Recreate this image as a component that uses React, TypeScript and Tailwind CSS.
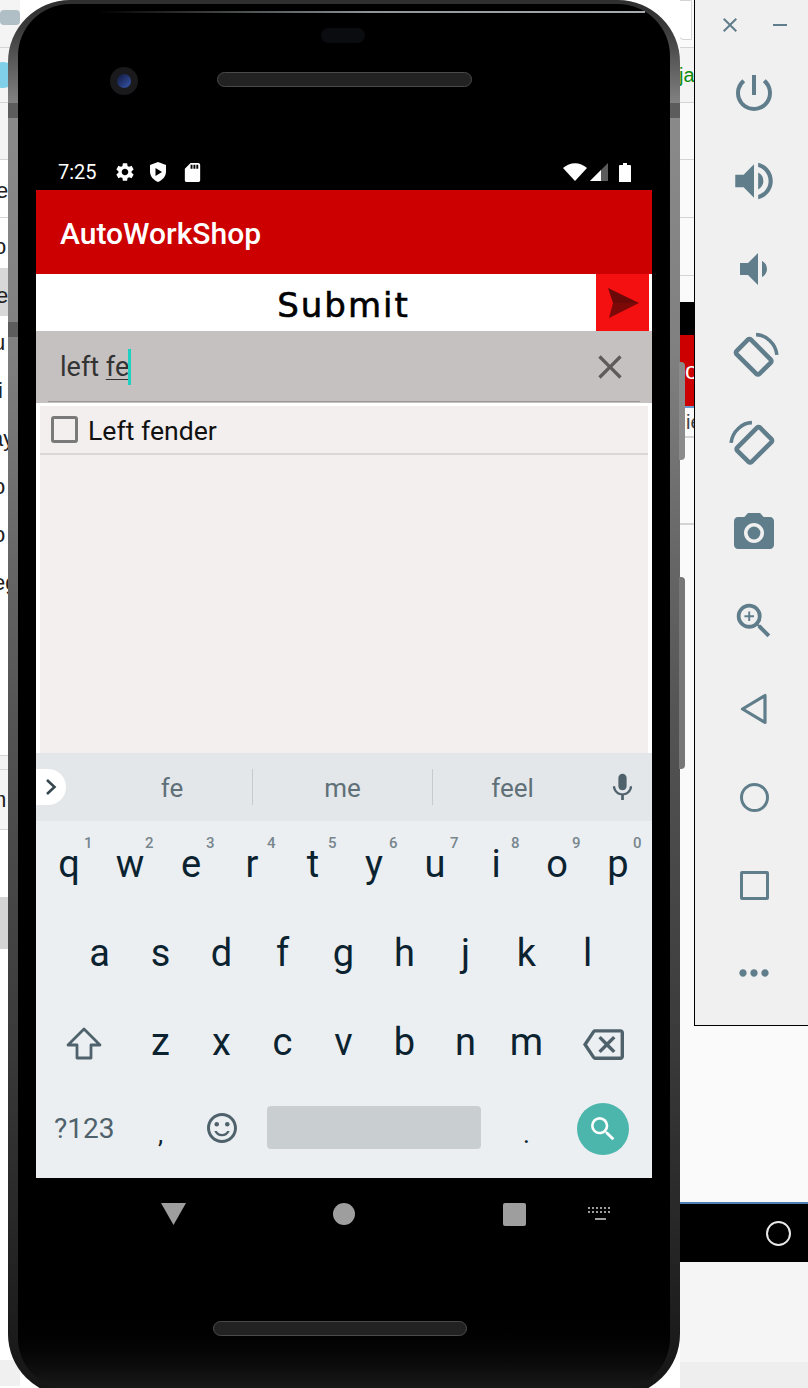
import React from "react";
import {
  MdSettings, MdSdCard, MdSearch, MdMic, MdOutlineBackspace, MdOutlineSentimentSatisfied,
  MdPowerSettingsNew, MdVolumeUp, MdVolumeDown, MdPhotoCamera, MdZoomIn, MdMoreHoriz, MdClose,
} from "react-icons/md";

const roboto = "font-['Roboto',sans-serif]";
const SIDE = "#607d8b";

function Key({ c, n }: { c: string; n?: string }) {
  return (
    <div className="relative flex h-full items-center justify-center text-[38px] leading-none text-[#0b2330]">
      <span className="relative -top-[2px]">{c}</span>
      {n && <span className="absolute right-[7px] top-[13px] text-[15px] font-medium leading-[18px] text-[#78868d]">{n}</span>}
    </div>
  );
}

function RotateIcon({ flip }: { flip?: boolean }) {
  return (
    <svg width="50" height="50" viewBox="0 0 48 48" fill="none" stroke={SIDE} className={flip ? "-scale-x-100" : ""}>
      <rect x="14" y="8.5" width="19.5" height="31" rx="2" strokeWidth="4.4" transform="rotate(-45 23.5 24)" />
      <path d="M26 2.5 C35 2.5 45 11 46 22" strokeWidth="3.4" />
    </svg>
  );
}

const sideIcons: React.ReactNode[] = [
  <MdPowerSettingsNew key="p" size={48} color={SIDE} />,
  <MdVolumeUp key="v" size={50} color={SIDE} />,
  <MdVolumeDown key="d" size={48} color={SIDE} />,
  <RotateIcon key="r" />,
  <RotateIcon key="l" flip />,
  <MdPhotoCamera key="c" size={48} color={SIDE} />,
  <MdZoomIn key="z" size={46} color={SIDE} />,
  <svg key="b" width="28" height="32" viewBox="0 0 28 32" fill="none" stroke={SIDE} strokeWidth="3.2" strokeLinejoin="round"><path d="M25 2.5 V29.5 L2.5 16 Z" /></svg>,
  <div key="o" className="h-[29px] w-[29px] rounded-full border-[3px] border-[#607d8b]" />,
  <div key="s" className="h-[29px] w-[29px] rounded-[2px] border-[3px] border-[#607d8b]" />,
  <MdMoreHoriz key="m" size={44} color={SIDE} />,
];

function Desktop() {
  return (
    <div className="flex h-[1388px] w-[8px] shrink-0 flex-col overflow-visible font-['Liberation_Sans',sans-serif]">
      <div className="w-[20px] bg-[#f4f4f4]">
        <div className="h-[48px] overflow-hidden border-b border-[#d4d4d4] pt-[10px]"><div className="h-[15px] w-[20px] rounded-sm bg-[#b0bec5]" /></div>
        <div className="flex h-[55px] items-center border-b border-[#d4d4d4]"><div className="-ml-[10px] h-[26px] w-[26px] rounded-full bg-[#7fd0e8]" /></div>
        <div className="h-[57px] border-b border-[#d4d4d4]" />
        <div className="flex h-[58px] items-center justify-start border-b border-[#d4d4d4] bg-white pt-[4px] text-[22px] text-[#222]"><span className="-ml-[4px]">e</span></div>
        <div className="flex h-[50px] items-center bg-white pt-[6px] text-[22px] text-[#222]"><span className="-ml-[6px]">o</span></div>
        <div className="flex h-[48px] items-center bg-[#d8d8d8] pt-[6px] text-[22px] text-[#222]"><span className="-ml-[4px]">e</span></div>
        <div className="flex h-[439px] flex-col bg-white pt-[3px] text-[22px] leading-[48px] text-[#222]">
          {["u", "i", "ay", "o", "o", "eg"].map((t, i) => (
            <div key={i} className={`flex h-[48px] items-center ${t === "ay" ? "-ml-[9px]" : t === "eg" ? "-ml-[7px]" : t === "i" ? "-ml-[2px]" : "-ml-[7px]"}`}>{t}</div>
          ))}
        </div>
        <div className="h-[15px] border-y border-[#d4d4d4] bg-[#f2f2f2]" />
        <div className="flex h-[60px] items-center overflow-hidden border-b border-[#d4d4d4] bg-[#f4f4f4] text-[22px] text-[#222]"><span className="-ml-[12px]">m</span></div>
        <div className="h-[67px] bg-white" />
        <div className="h-[52px] bg-[#d4d4d4]" />
        <div className="h-[411px] bg-white" />
        <div className="h-[26px] bg-[#f0f0f0]" />
      </div>
    </div>
  );
}

function StatusBar() {
  return (
    <div className={`flex h-[30px] w-[616px] items-center pb-[6px] pl-[22px] pr-[21px] text-white ${roboto}`}>
      <span className="w-[41px] text-[20px] leading-none">7:25</span>
      <MdSettings size={22} className="ml-[15px]" />
      <svg width="18" height="20" viewBox="0 0 18 20" className="ml-[13px]">
        <path d="M9 0 L17 3 V9.5 C17 14.5 13.5 18 9 20 C4.5 18 1 14.5 1 9.5 V3 Z" fill="#fff" />
        <path d="M6.5 6 L13 10 L6.5 14 Z" fill="#000" />
      </svg>
      <MdSdCard size={23} className="ml-[14px]" />
      <div className="flex-1" />
      <svg width="24" height="18" viewBox="0 0 24 18"><path d="M0 5 C7 -1.5 17 -1.5 24 5 L12 18 Z" fill="#fff" /></svg>
      <svg width="18" height="18" viewBox="0 0 18 18" className="ml-[3px]"><path d="M18 0 V18 H0 Z" fill="#5c5c5c" /><path d="M11 7 V18 H0 Z" fill="#fff" /></svg>
      <svg width="12" height="19" viewBox="0 0 12 19" className="ml-[11px]"><path d="M4 0 H8 V2 H11 A1 1 0 0 1 12 3 V19 H0 V3 A1 1 0 0 1 1 2 H4 Z" fill="#fff" /></svg>
    </div>
  );
}

function Suggestions() {
  return (
    <div className="flex h-[68px] items-center bg-[#e4e7ea] text-[26px] text-[#5f7078]">
      <div className="flex h-[36px] w-[30px] items-center justify-center rounded-r-[18px] bg-white">
        <svg width="12" height="18" viewBox="0 0 12 18" fill="none" stroke="#37474f" strokeWidth="2.6"><path d="M2 2 L9.5 9 L2 16" /></svg>
      </div>
      <div className="w-[26px]" />
      <div className="flex h-[36px] w-[161px] items-center justify-center border-r border-[#c6cbce] pt-[2px]">fe</div>
      <div className="flex h-[36px] w-[180px] items-center justify-center border-r border-[#c6cbce] pt-[2px]">me</div>
      <div className="flex h-[36px] w-[159px] items-center justify-center pt-[2px]">feel</div>
      <div className="flex flex-1 items-center justify-center"><MdMic size={33} color="#4f626c" /></div>
    </div>
  );
}

function Keyboard() {
  const row = "h-[89.25px]";
  const wide = "grid grid-cols-[91.5px_repeat(7,61px)_92px]";
  return (
    <div className={`h-[357px] bg-[#ebeff2] pl-[2.5px] ${roboto}`}>
      <div className={`grid grid-cols-[repeat(10,61px)] ${row}`}>
        {"qwertyuiop".split("").map((c, i) => <Key key={c} c={c} n={String((i + 1) % 10)} />)}
      </div>
      <div className={`grid grid-cols-[repeat(9,61px)] pl-[30.5px] ${row}`}>
        {"asdfghjkl".split("").map((c) => <Key key={c} c={c} />)}
      </div>
      <div className={`${wide} ${row}`}>
        <div className="flex items-center justify-center">
          <svg width="36" height="34" viewBox="0 0 36 34" fill="none" stroke="#4f626c" strokeWidth="2.8" strokeLinejoin="round"><path d="M18 2 L34 18 H25 V31 H11 V18 H2 Z" /></svg>
        </div>
        {"zxcvbnm".split("").map((c) => <Key key={c} c={c} />)}
        <div className="flex items-center justify-center"><MdOutlineBackspace size={41} color="#4f626c" /></div>
      </div>
      <div className={`${wide} ${row}`}>
        <div className="flex items-center justify-center pb-[8px] text-[28px] text-[#4f626c]">?123</div>
        <div className="flex items-center justify-center pt-[2px] text-[26px] text-[#0b2330]">,</div>
        <div className="flex items-center justify-center pb-[10px]"><MdOutlineSentimentSatisfied size={36} color="#4f626c" /></div>
        <div className="col-span-4 flex items-center px-[15px] pb-[12px]"><div className="h-[43px] w-full rounded-[4px] bg-[#c9ced1]" /></div>
        <div className="flex items-center justify-center pt-[2px] text-[26px] text-[#0b2330]">.</div>
        <div className="flex items-center justify-center pb-[8px]">
          <div className="flex h-[52px] w-[52px] items-center justify-center rounded-full bg-[#4db6ac]"><MdSearch size={32} color="#fff" /></div>
        </div>
      </div>
    </div>
  );
}

function Screen() {
  return (
    <div className={`w-[616px] ${roboto}`}>
      <div className="flex h-[84px] items-center bg-[#cc0000] pl-[24px] pt-[3px] text-[30px] font-medium text-white">AutoWorkShop</div>
      <div className="flex h-[57px] items-stretch bg-white pr-[3px]">
        <div className="flex flex-1 items-center justify-center pl-[55px] pt-[5px] font-['DejaVu_Sans',sans-serif] text-[34px] tracking-[2px] text-black [-webkit-text-stroke:0.6px_black]">Submit</div>
        <div className="flex w-[53px] items-center justify-center bg-[#f40f10]">
          <svg width="34" height="32" viewBox="0 0 34 32"><path d="M2 1 L33 16 H7 Z" fill="#6b0808" /><path d="M7 16 H33 L3 31 Z" fill="#7d0808" /></svg>
        </div>
      </div>
      <div className="h-[72px] bg-[#c5c1c0] px-[12px]">
        <div className="flex h-[71px] items-center border-b border-[#9a9796] pl-[12px] pr-[10px] pt-[2px] text-[27px] text-[#333]">
          <span className="whitespace-pre">left </span>
          <span className="underline decoration-[#333] decoration-1 underline-offset-[3px]">fe</span>
          <div className="-ml-[1px] h-[36px] w-[3px] bg-[#1fd0c0]" />
          <div className="flex-1" />
          <MdClose size={40} color="#5f5b5a" />
        </div>
      </div>
      <div className="h-[350px] bg-white px-[4px] pt-[3px]">
        <div className="h-[347px] bg-[#f2efee]">
          <div className="flex h-[49px] items-center border-b-2 border-[#d9d6d5] pl-[11px] text-[26.6px] text-[#111]">
            <div className="h-[27px] w-[27px] rounded-[3px] border-[3px] border-[#7a7a7a]" />
            <span className="ml-[10px] pt-[3px]">Left fender</span>
          </div>
        </div>
      </div>
      <Suggestions />
      <Keyboard />
    </div>
  );
}

function Phone() {
  return (
    <div className="relative h-[1396px] w-[672px] shrink-0 rounded-[62px] bg-[linear-gradient(to_bottom,#2e2e2e_0%,#3a3a3a_2%,#8a8a8a_8%,#808080_25%,#565656_50%,#3a3a3a_75%,#151515_100%)] pt-[4px]">
      <div className="absolute left-0 top-[103px] h-[15px] w-[10px] bg-[#5c5c5c]" />
      <div className="absolute right-0 top-[103px] h-[15px] w-[10px] bg-[#5c5c5c]" />
      <div className="absolute left-0 top-[322px] h-[15px] w-[10px] bg-[#5c5c5c]" />
      <div className="pointer-events-none absolute -right-[5px] top-[362px] h-[98px] w-[6px] rounded-r-sm bg-[#8b8b8b]" />
      <div className="pointer-events-none absolute -right-[5px] top-[577px] h-[192px] w-[6px] rounded-r-sm bg-[#777]" />
      <div className="mx-[10px] flex h-[1386px] flex-col items-center rounded-[52px] bg-gradient-to-b from-black via-black via-[94%] to-[#1a1a1a] pt-[156px]">
        <StatusBar />
        <Screen />
        <div className="flex h-[72px] w-[616px] items-center">
          <div className="ml-[125px]"><svg width="25" height="22" viewBox="0 0 25 22" className="block"><path d="M0 0 H25 L12.5 22 Z" fill="#9e9e9e" /></svg></div>
          <div className="ml-[147px] h-[22px] w-[22px] rounded-full bg-[#9e9e9e]" />
          <div className="ml-[148px] h-[23px] w-[23px] rounded-[2px] bg-[#9e9e9e]" />
          <svg width="24" height="14" viewBox="0 0 24 14" className="ml-[62px]" fill="#9e9e9e">
            {[0, 4, 8, 12, 16, 20].map((x) => <rect key={x} x={x} y="0" width="2" height="2" />)}
            {[0, 4, 8, 12, 16, 20].map((x) => <rect key={x} x={x} y="4" width="2" height="2" />)}
            <rect x="7" y="11" width="11" height="2" />
          </svg>
        </div>
      </div>
      <div className="absolute left-[102px] top-[67px] flex h-[28px] w-[28px] items-center justify-center rounded-full bg-[#1a1a1c]">
        <div className="h-[14px] w-[14px] rounded-full bg-gradient-to-br from-[#10183a] to-[#3a58b0]" />
      </div>
      <div className="absolute left-[313px] top-[28px] h-[15px] w-[44px] rounded-full bg-[#0b0c10]" />
      <div className="absolute left-[209px] top-[72px] h-[15px] w-[255px] rounded-full border border-[#4a4a4a] bg-[#222]" />
      <div className="absolute left-[205px] top-[1321px] h-[15px] w-[254px] rounded-full border border-[#4a4a4a] bg-[#222]" />
      <div className="absolute left-[90px] right-[35px] top-[11px] h-[2px] bg-gradient-to-r from-transparent via-[#8f9496] to-[#a8acae]" />
    </div>
  );
}

function RightStrip() {
  return (
    <div className="w-[14px] shrink-0 overflow-hidden bg-[#fafafa] font-['Liberation_Sans',sans-serif] text-[20px]">
      <div className="h-[48px] border-b border-[#d4d4d4]"><div className="ml-[-2px] h-[40px] w-[14px] rounded-bl-md border border-[#d4d4d4] bg-white" /></div>
      <div className="flex h-[55px] items-center whitespace-nowrap border-b border-[#d4d4d4] bg-[#f4f4f4] text-[#0a8a0a]"><span className="-ml-[1px]">ja</span></div>
      <div className="h-[57px] border-b border-[#d4d4d4]" />
      <div className="h-[58px] border-b border-[#d4d4d4]" />
      <div className="h-[58px] border-b border-[#d4d4d4]" />
      <div className="h-[26px]" />
      <div className="h-[33px] bg-black" />
      <div className="flex h-[71px] items-center bg-[#cc0000] text-[24px] text-white"><span className="ml-[5px]">o</span></div>
      <div className="h-[2px] bg-[#6a9bd0]" />
      <div className="flex h-[28px] items-center text-[#444]"><span className="ml-[6px]">ie</span></div>
      <div className="h-[2px] bg-[#d4d4d4]" />
      <div className="h-[85px]" />
      <div className="h-[2px] bg-[#d4d4d4]" />
    </div>
  );
}

function Sidebar() {
  return (
    <div className="h-[1026px] w-[114px] shrink-0 border-b border-l border-black bg-[#f0f0f0] pl-[5px]">
      <div className="flex h-[49px] items-center">
        <div className="ml-[18px]"><MdClose size={24} color={SIDE} /></div>
        <div className="ml-[31px] h-[2px] w-[14px] bg-[#607d8b]" />
      </div>
      {sideIcons.map((ic, i) => (
        <div key={i} className="flex h-[88px] items-center justify-center">{ic}</div>
      ))}
    </div>
  );
}

export default function App() {
  return (
    <div className="flex h-[1388px] w-[808px] overflow-hidden bg-white">
      <Desktop />
      <Phone />
      <div className="flex w-[128px] shrink-0 flex-col">
        <div className="flex"><RightStrip /><Sidebar /></div>
        <div className="h-[176px] bg-[#fafafa]" />
        <div className="flex h-[60px] items-center justify-end border-t-2 border-[#4a80b5] bg-black pr-[17px]">
          <div className="h-[25px] w-[25px] rounded-full border-[2.5px] border-[#e8e8e8]" />
        </div>
        <div className="h-[100px] bg-[#f5f5f5]" />
        <div className="flex-1 bg-[#eee]" />
      </div>
    </div>
  );
}
